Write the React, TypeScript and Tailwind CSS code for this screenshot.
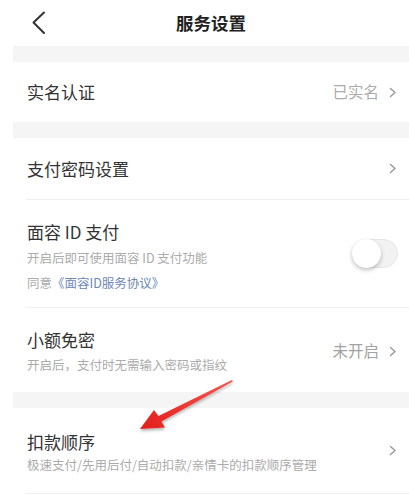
import React from "react";

const FONT = { fontFamily: '"Noto Sans CJK SC", "Noto Sans", sans-serif' };

function Chevron() {
  return (
    <svg width="8" height="11" viewBox="0 0 8 11" className="shrink-0">
      <path d="M1.5 1.5 L6 5.5 L1.5 9.5" fill="none" stroke="#9a9a9a" strokeWidth="1.5" strokeLinecap="round" strokeLinejoin="round" />
    </svg>
  );
}

function Band() {
  return <div className="h-[16px] bg-[#f5f5f5]" />;
}

function Divider() {
  return <div className="ml-[13px] h-px bg-[#efefef]" />;
}

function Toggle() {
  return (
    <div className="relative h-[29px] w-[46px] rounded-full border border-[#e6e6e6] bg-[#f2f2f2]">
      <div className="absolute left-[-1px] top-[-1px] h-[29px] w-[29px] rounded-full bg-white shadow-[0_2px_4px_rgba(0,0,0,0.25)]" />
    </div>
  );
}

export default function App() {
  return (
    <div className="relative h-[498px] w-[409px] overflow-hidden bg-white" style={FONT}>
      <div className="ml-[13px]">
        {/* header */}
        <div className="relative flex h-[46px] items-center justify-center">
          <svg width="16" height="24" viewBox="0 0 16 24" className="absolute left-[18px] top-[11px]">
            <path d="M13 1.5 L2.5 11.5 L13 22" fill="none" stroke="#333" strokeWidth="2" strokeLinecap="round" strokeLinejoin="round" />
          </svg>
          <span className="text-[17.5px] font-bold leading-none text-[#222]">服务设置</span>
        </div>

        <Band />

        <div className="flex h-[60px] items-center justify-between pl-[14px] pr-[12px]">
          <span className="text-[17px] text-[#333]">实名认证</span>
          <div className="flex items-center gap-[10px]">
            <span className="text-[15.5px] text-[#acacac]">已实名</span>
            <Chevron />
          </div>
        </div>

        <Band />

        <div className="flex h-[61px] items-center justify-between pl-[14px] pr-[12px]">
          <span className="text-[17px] text-[#333]">支付密码设置</span>
          <Chevron />
        </div>
        <Divider />

        <div className="flex h-[107px] items-center justify-between pl-[14px] pr-[11px]">
          <div className="self-start pt-[20px]">
            <div className="text-[17px] leading-[24px] text-[#333]">面容 ID 支付</div>
            <div className="mt-px text-[12.5px] leading-[25px] text-[#ababab]">开启后即可使用面容 ID 支付功能</div>
            <div className="text-[12.5px] leading-[25px] text-[#ababab]">
              同意<span className="text-[#6d87b5]">《面容ID服务协议》</span>
            </div>
          </div>
          <Toggle />
        </div>
        <Divider />

        <div className="flex h-[84px] items-center justify-between pl-[14px] pr-[12px]">
          <div className="self-start pt-[20px]">
            <div className="text-[17px] leading-[24px] text-[#333]">小额免密</div>
            <div className="text-[12.5px] leading-[25px] text-[#ababab]">开启后，支付时无需输入密码或指纹</div>
          </div>
          <div className="flex items-center gap-[10px] pt-[2px]">
            <span className="text-[15.5px] text-[#a3a3a3]">未开启</span>
            <Chevron />
          </div>
        </div>

        <Band />

        <div className="flex h-[85px] items-center justify-between pl-[14px] pr-[12px]">
          <div className="self-start pt-[22px]">
            <div className="text-[17px] leading-[24px] text-[#333]">扣款顺序</div>
            <div className="text-[12.5px] leading-[22px] text-[#ababab]">极速支付/先用后付/自动扣款/亲情卡的扣款顺序管理</div>
          </div>
          <Chevron />
        </div>
        <Divider />
      </div>

      {/* annotation arrow */}
      <svg className="pointer-events-none absolute left-0 top-0" width="409" height="498" viewBox="0 0 409 498">
        <defs>
          <linearGradient id="arr" x1="232" y1="381" x2="140" y2="429" gradientUnits="userSpaceOnUse">
            <stop offset="0" stopColor="#f2554f" />
            <stop offset="1" stopColor="#e41f1b" />
          </linearGradient>
          <filter id="sh" x="-20%" y="-20%" width="140%" height="160%">
            <feDropShadow dx="0" dy="2" stdDeviation="1.5" floodColor="#000" floodOpacity="0.3" />
          </filter>
        </defs>
        <polygon
          points="140,429 154,410 158.5,416 232,380 232.8,381.6 161.5,421.5 165,427.5"
          fill="url(#arr)"
          filter="url(#sh)"
        />
      </svg>
    </div>
  );
}
